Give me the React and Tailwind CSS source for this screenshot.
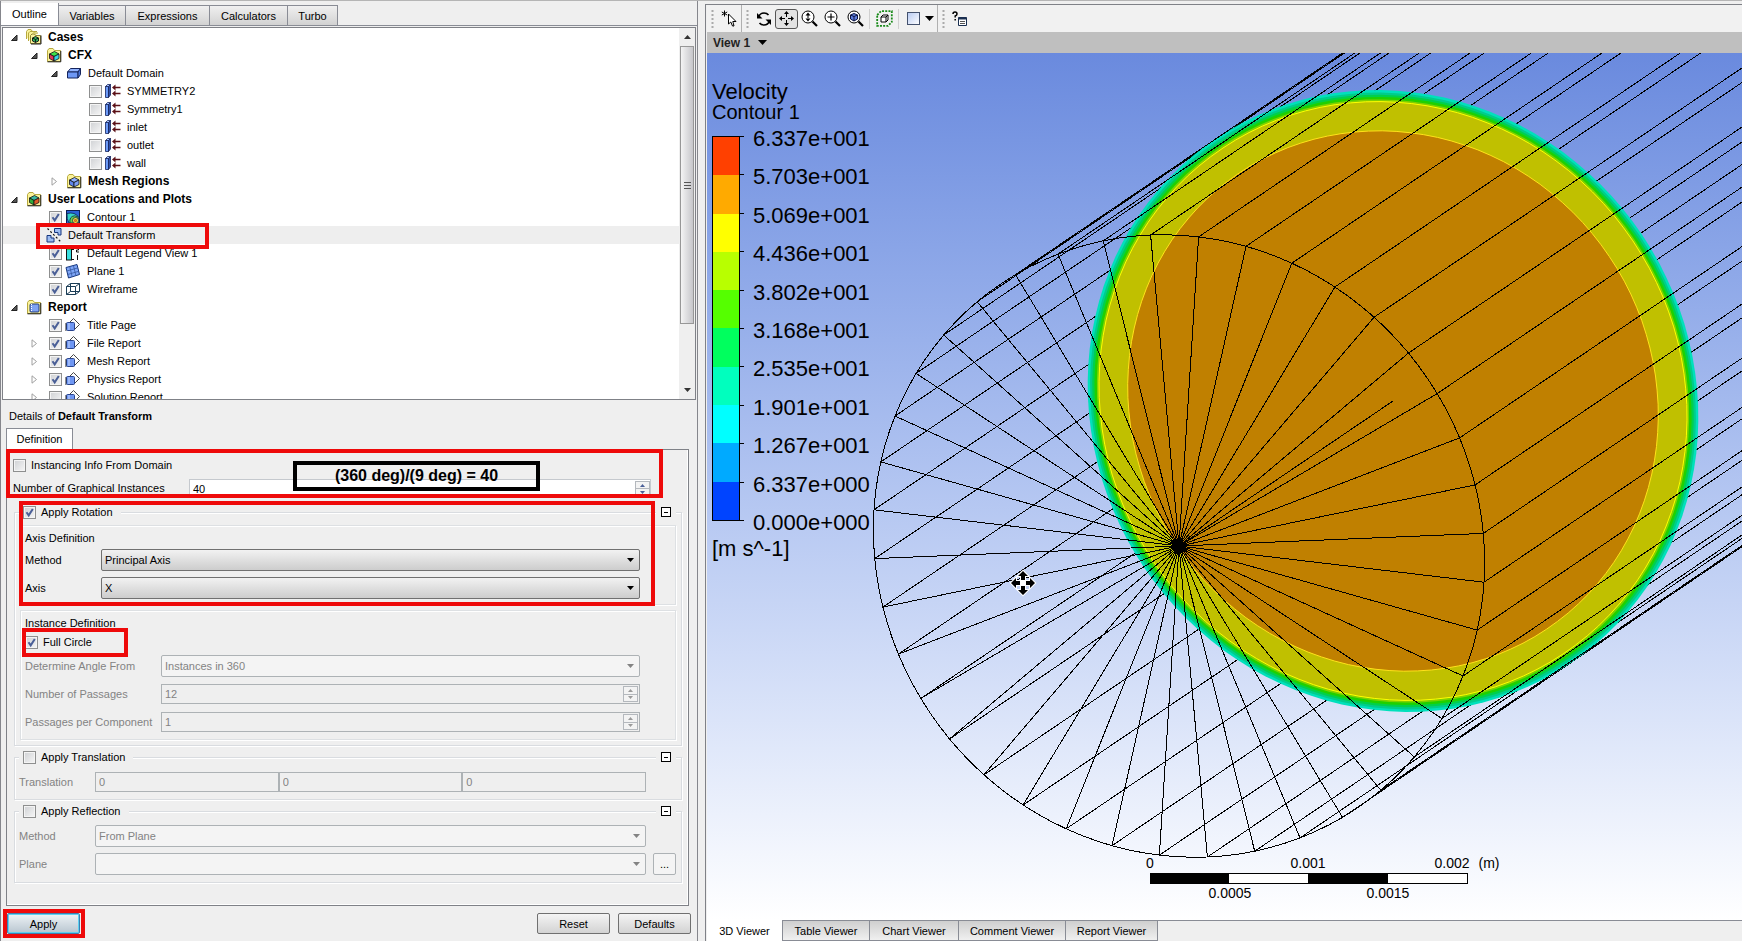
import React from "react";

/* ---------- small shared controls ---------- */

function Check({ label, checked = false, hidden = false }) {
  return (
    <label className="flex items-center whitespace-nowrap">
      <span className="relative block h-[13px] w-[13px] shrink-0">
        <input
          type="checkbox"
          defaultChecked={checked}
          aria-label={hidden ? label : undefined}
          className="peer block h-[13px] w-[13px] appearance-none border border-[#8e8f8f] bg-gradient-to-br from-[#cfd1d4] to-[#f6f6f6] shadow-[inset_0_0_0_1px_#f4f4f4]"
        />
        <svg viewBox="0 0 13 13" className="pointer-events-none absolute inset-0 hidden h-[13px] w-[13px] peer-checked:block">
          <path d="M3.5 6.2 L5.7 9.4 L9.8 3" fill="none" stroke="#4a5f97" strokeWidth="2" />
        </svg>
      </span>
      {!hidden && <span className="ml-[5px]">{label}</span>}
    </label>
  );
}

function Combo({ id, value, disabled = false }) {
  return (
    <div className="relative min-w-0 flex-1">
      <select
        id={id}
        disabled={disabled}
        className={
          disabled
            ? "block h-[22px] w-full appearance-none rounded-[2px] border border-[#adb2b5] bg-[#f4f4f4] pl-[3px] text-[11px] text-[#838383] opacity-100"
            : "block h-[22px] w-full appearance-none rounded-[2px] border border-[#707070] bg-gradient-to-b from-[#f2f2f2] to-[#cdcdcd] pl-[3px] text-[11px] text-black"
        }
      >
        <option>{value}</option>
      </select>
      <svg viewBox="0 0 7 4" className="pointer-events-none absolute top-[9px] right-[6px] h-[4px] w-[7px]">
        <path d="M0 0H7L3.5 4Z" fill={disabled ? "#838383" : "#000"} />
      </svg>
    </div>
  );
}

function Arrows({ color }) {
  return (
    <div className="flex w-[15px] flex-col">
      <button type="button" aria-label="Increase" className="flex flex-1 items-center justify-center border border-[#b4b8bd] bg-[#f3f3f3]">
        <svg viewBox="0 0 5 3" className="h-[3px] w-[5px]"><path d="M0 3H5L2.5 0Z" fill={color} /></svg>
      </button>
      <button type="button" aria-label="Decrease" className="flex flex-1 items-center justify-center border border-t-0 border-[#b4b8bd] bg-[#f3f3f3]">
        <svg viewBox="0 0 5 3" className="h-[3px] w-[5px]"><path d="M0 0H5L2.5 3Z" fill={color} /></svg>
      </button>
    </div>
  );
}

function Spin({ id, value }) {
  return (
    <div className="flex h-[20px] min-w-0 flex-1 border border-[#adb2b5] p-[1px]">
      <input id={id} disabled defaultValue={value} className="min-w-0 flex-1 bg-transparent pl-[2px] text-[#838383]" />
      <Arrows color="#9a9a9a" />
    </div>
  );
}

function Collapse({ label }) {
  return (
    <button type="button" aria-label={label} className="flex h-[10px] w-[10px] items-center justify-center border border-black bg-white">
      <span className="block h-px w-[4px] bg-black" />
    </button>
  );
}

function Group({ label, checked, children, className }) {
  return (
    <section className={"ml-px border border-[#d9dce0] shadow-[inset_1px_1px_0_#fff,1px_1px_0_#fff] " + className}>
      <div className="-mt-[8px] ml-[4px] mr-[5px] flex h-[14px] items-center justify-between">
        <div className="bg-[#efefef] pr-[8px] pl-[4px]">
          <Check label={label} checked={checked} />
        </div>
        <div className="bg-[#efefef] px-[5px]">
          <Collapse label={"Collapse " + label} />
        </div>
      </div>
      {children}
    </section>
  );
}

/* ---------- tree icons ---------- */

function Cube({ top, left, right }) {
  return (
    <g stroke="#111" strokeWidth="0.8" strokeLinejoin="round">
      <path d="M3.5 7 8.5 4.5 13 7 8 9.5Z" fill={top} />
      <path d="M3.5 7 8 9.5V14L3.5 11.5Z" fill={left} />
      <path d="M13 7 8 9.5V14L13 11.5Z" fill={right} />
    </g>
  );
}

function Folder({ children }) {
  return (
    <g>
      <path d="M1.5 14.5V3.5L3 1.5H7L8.5 3.5H14.5V14.5Z" fill="#fbf39a" stroke="#b7a83e" />
      <path d="M14.8 4V14.8H1.5" fill="none" stroke="#222" />
      {children}
    </g>
  );
}

const ICONS = {
  cases: (
    <g>
      <path d="M.5 10V2.5L2 .5H5L6.500 2.500H11" fill="#fbf39a" stroke="#b7a83e" />
      <path d="M2.500 12V4L4 2.500H7L8.500 4H12" fill="#fbf39a" stroke="#b7a83e" />
      <path d="M4.500 14.500V6.500L6 5H8.500L9.500 6.500H14.500V14.500Z" fill="#fbf39a" stroke="#8f8430" />
      <path d="M15 6.500V15H5" fill="none" stroke="#222" />
      <path d="M6.500 9 9.500 7.500 12.500 9V12L9.500 13.500 6.500 12Z" fill="#2fae5c" stroke="#111" strokeWidth=".9" />
      <path d="M6.500 9 9.500 10.500 12.500 9M9.500 10.500V13.500" fill="none" stroke="#111" strokeWidth=".9" />
    </g>
  ),
  cfx: <Folder><Cube top="#3ee04a" left="#e0335a" right="#35d3e8" /></Folder>,
  mesh: <Folder><Cube top="#8fb0ff" left="#5f86ee" right="#7c9ef6" /></Folder>,
  plots: <Folder><Cube top="#38b9a0" left="#2fae3c" right="#e25a28" /></Folder>,
  report: (
    <Folder>
      <rect x="4" y="5" width="9" height="8" rx="1" fill="#7fa2f2" stroke="#233a7d" />
      <path d="M5.500 5V13" stroke="#fff" strokeDasharray="1 1" />
    </Folder>
  ),
  domain: (
    <g stroke="#15245c" strokeLinejoin="round">
      <path d="M1.500 7 4.500 3.500H14.500L12 7Z" fill="#8fb2ff" />
      <path d="M1.500 7H12V13H1.500Z" fill="#6d97f5" />
      <path d="M12 7 14.500 3.500V9.500L12 13Z" fill="#4a74d8" />
    </g>
  ),
  boundary: (
    <g>
      <path d="M.5 3.500H3.500V14.500H.5Z" fill="#6d9bf8" stroke="#15245c" strokeWidth=".8" />
      <path d="M.5 3.500 2.500 1.500H5.500L3.500 3.500Z" fill="#a6c0ff" stroke="#15245c" strokeWidth=".8" />
      <path d="M3.500 3.500 5.500 1.500V12L3.500 14.500Z" fill="#2e4fa8" stroke="#15245c" strokeWidth=".8" />
      <path d="M9 4.500H15.500M9 10.500H15.500" stroke="#5c1218" strokeWidth="1.300" />
      <path d="M7 4.500 10.500 1.500V7.500ZM7 10.500 10.500 7.500V13.500Z" fill="#5c1218" />
    </g>
  ),
  contour: (
    <g>
      <rect x="1.500" y="1.500" width="13" height="13" fill="#2a62d8" stroke="#0d1f50" />
      <path d="M2 4.500Q10 2.500 14 8.500V14H4Q1.500 10 2 4.500Z" fill="#35d3c8" stroke="#0d1f50" strokeWidth=".8" />
      <path d="M5 14Q4 7.500 9.500 6.800Q13.500 7 14 10V14Z" fill="#63d94a" stroke="#0d1f50" strokeWidth=".8" />
      <circle cx="10.500" cy="11.500" r="3" fill="#f7e948" stroke="#0d1f50" strokeWidth=".8" />
      <circle cx="10.500" cy="11.500" r="1.200" fill="#ef7d28" stroke="#7a3a10" strokeWidth=".5" />
    </g>
  ),
  transform: (
    <g>
      <path d="M1 8.500H5V11H8V15H1Z" fill="#9cbcf2" stroke="#15357c" />
      <path d="M8.500 1.500H15V8H12V5.500H8.500Z" fill="#9cbcf2" stroke="#15357c" />
      <path d="M1.500 1.500 14.500 14.500" stroke="#111" strokeDasharray="2 2" strokeWidth="1.200" />
    </g>
  ),
  legend: (
    <g>
      <rect x="1.500" y="-1" width="5" height="16" fill="#39dfe0" stroke="#111" />
      <rect x="2" y="0" width="4" height="5" fill="#2fbd4c" />
      <path d="M6.500 4.500H9M6.500 14.500H9" stroke="#111" />
      <path d="M11 2.500H13.500V5H11.500V7H14M12.500 10V15" fill="none" stroke="#111" />
    </g>
  ),
  plane: (
    <g>
      <path d="M1 4.500 12 1.500 14.500 11.500 3.500 15Z" fill="#7fa6f7" stroke="#15357c" strokeLinejoin="round" />
      <path d="M4.700 3.500 7.200 13.800M8.400 2.500 10.900 12.600M1.800 8 12.800 4.900M2.700 11.500 13.600 8.300" stroke="#35589f" strokeWidth=".8" />
    </g>
  ),
  wire: (
    <g fill="none" stroke="#1a3c55" strokeWidth="1">
      <path d="M1.500 5.500H10.500V13.500H1.500ZM5.500 2.500H14.500V10.500H5.500ZM1.500 5.500 5.500 2.500M10.500 5.500 14.500 2.500M10.500 13.500 14.500 10.500M1.500 13.500 5.500 10.500" />
    </g>
  ),
  page: (
    <g>
      <path d="M4 6 8.500 1.500 14.500 7.500 9 13Z" fill="#fff" stroke="#333" strokeWidth=".9" />
      <rect x="1.500" y="5.500" width="8" height="8" rx="1" fill="#6f97f3" stroke="#2a458f" />
      <path d="M1.500 7H0M1.500 9H0M1.500 11H0M1.500 13H0" stroke="#222" />
      <path d="M4 6V13" stroke="#c9d8ff" />
    </g>
  ),
};

function TreeIcon({ name, className }) {
  return (
    <svg viewBox="0 0 16 16" aria-hidden="true" className={"block h-[16px] w-[16px] shrink-0 " + className}>
      {ICONS[name]}
    </svg>
  );
}

function Twisty({ state }) {
  return (
    <span className="flex h-[12px] w-[12px] shrink-0 items-center justify-center">
      {state === "open" && (
        <svg viewBox="0 0 7 7" className="h-[7px] w-[7px]"><path d="M.5 6.500H6V1Z" fill="#555" stroke="#222" /></svg>
      )}
      {state === "closed" && (
        <svg viewBox="0 0 7 9" className="h-[9px] w-[7px]"><path d="M1 .8 5.500 4.500 1 8.200Z" fill="#fff" stroke="#a0a0a0" /></svg>
      )}
    </span>
  );
}

const TREE = [
  { t: "Cases", icon: "cases", pad: "pl-[5px]", tw: "open", bold: true },
  { t: "CFX", icon: "cfx", pad: "pl-[25px]", tw: "open", bold: true },
  { t: "Default Domain", icon: "domain", pad: "pl-[45px]", tw: "open" },
  { t: "SYMMETRY2", icon: "boundary", pad: "pl-[65px]", check: false },
  { t: "Symmetry1", icon: "boundary", pad: "pl-[65px]", check: false },
  { t: "inlet", icon: "boundary", pad: "pl-[65px]", check: false },
  { t: "outlet", icon: "boundary", pad: "pl-[65px]", check: false },
  { t: "wall", icon: "boundary", pad: "pl-[65px]", check: false },
  { t: "Mesh Regions", icon: "mesh", pad: "pl-[45px]", tw: "closed", bold: true },
  { t: "User Locations and Plots", icon: "plots", pad: "pl-[5px]", tw: "open", bold: true },
  { t: "Contour 1", icon: "contour", pad: "pl-[25px]", check: true },
  { t: "Default Transform", icon: "transform", pad: "pl-[25px]", selected: true },
  { t: "Default Legend View 1", icon: "legend", pad: "pl-[25px]", check: true },
  { t: "Plane 1", icon: "plane", pad: "pl-[25px]", check: true },
  { t: "Wireframe", icon: "wire", pad: "pl-[25px]", check: true },
  { t: "Report", icon: "report", pad: "pl-[5px]", tw: "open", bold: true },
  { t: "Title Page", icon: "page", pad: "pl-[25px]", check: true },
  { t: "File Report", icon: "page", pad: "pl-[25px]", tw: "closed", check: true },
  { t: "Mesh Report", icon: "page", pad: "pl-[25px]", tw: "closed", check: true },
  { t: "Physics Report", icon: "page", pad: "pl-[25px]", tw: "closed", check: true },
  { t: "Solution Report", icon: "page", pad: "pl-[25px]", tw: "closed", check: false },
];

function TreeRow({ row }) {
  const hasCheck = row.check !== undefined;
  return (
    <li className={"relative flex h-[18px] items-center whitespace-nowrap " + row.pad + (row.selected ? " z-10 bg-[#eeeeee]" : "")}>
      <Twisty state={row.tw} />
      {hasCheck && (
        <span className="ml-[9px]">
          <Check label={row.t} checked={row.check} hidden />
        </span>
      )}
      <TreeIcon name={row.icon} className={hasCheck ? "ml-[3px]" : "ml-[6px]"} />
      <span className={"ml-[6px]" + (row.bold ? " text-[12px] font-bold" : "")}>{row.t}</span>
      {row.selected && <span className="absolute -top-[3px] left-[33px] h-[26px] w-[173px] border-4 border-[#ee0a0a]" />}
    </li>
  );
}

/* ---------- left dock ---------- */

const TAB = "h-[20px] border border-b-0 border-l-0 border-[#898c95] bg-gradient-to-b from-[#f0f0f0] to-[#d2d2d2]";

function Outline() {
  return (
    <div>
      <nav className="flex h-[22px] items-end">
        <button type="button" className="h-[22px] w-[58px] border-r border-[#898c95] bg-white">Outline</button>
        <button type="button" className={TAB + " w-[67px]"}>Variables</button>
        <button type="button" className={TAB + " w-[84px]"}>Expressions</button>
        <button type="button" className={TAB + " w-[78px]"}>Calculators</button>
        <button type="button" className={TAB + " w-[50px]"}>Turbo</button>
      </nav>
      <div className="border-t border-[#898c95] pt-[1px] pr-[1px] pl-[1px]">
        <div className="flex h-[373px] border border-[#7f8187] bg-white">
          <ul className="min-w-0 flex-1 overflow-hidden">
            {TREE.map((row) => (
              <TreeRow key={row.t} row={row} />
            ))}
          </ul>
          <div className="flex w-[16px] flex-col items-center bg-[#efefef]">
            <button type="button" aria-label="Scroll up" className="flex h-[18px] w-full items-center justify-center">
              <svg viewBox="0 0 7 4" className="h-[4px] w-[7px]"><path d="M0 4H7L3.500 0Z" fill="#333" /></svg>
            </button>
            <div className="flex h-[278px] w-[14px] flex-col items-center justify-center gap-[2px] border border-[#979797] bg-gradient-to-r from-[#f4f4f4] to-[#c6c6ca]">
              <span className="h-px w-[7px] bg-[#555]" />
              <span className="h-px w-[7px] bg-[#555]" />
              <span className="h-px w-[7px] bg-[#555]" />
            </div>
            <button type="button" aria-label="Scroll down" className="mt-auto flex h-[18px] w-full items-center justify-center">
              <svg viewBox="0 0 7 4" className="h-[4px] w-[7px]"><path d="M0 0H7L3.500 4Z" fill="#333" /></svg>
            </button>
          </div>
        </div>
      </div>
    </div>
  );
}

const FIELD = "h-[20px] min-w-0 flex-1 border border-[#adb2b5] pl-[3px] text-[#838383]";
const BUTTON = "h-[21px] w-[73px] rounded-[2px] border border-[#707070] bg-gradient-to-b from-[#f4f4f4] to-[#d3d3d3]";

function Details() {
  return (
    <form className="flex flex-col pt-[8px] pr-[6px] pl-[5px]" onSubmit={(e) => e.preventDefault()}>
      <h2 className="h-[16px] pl-[3px] leading-[16px]">
        Details of <b>Default Transform</b>
      </h2>
      <div className="mt-[4px] flex">
        <button type="button" className="h-[21px] w-[67px] border border-b-0 border-[#898c95] bg-white">Definition</button>
      </div>

      <div className="relative mr-[2px] border border-[#7f8187] px-[6px] pt-[8px] pb-[22px] shadow-[inset_-1px_-1px_0_#fff]">
        <div className="pointer-events-none absolute -top-[1px] -left-[1px] z-10 h-[49px] w-[657px] border-4 border-[#ee0a0a]" />
        <div className="pointer-events-none absolute top-[51px] left-[12px] z-10 h-[105px] w-[636px] border-4 border-[#ee0a0a]" />
        <div className="pointer-events-none absolute top-[11px] left-[286px] z-10 flex h-[30px] w-[247px] items-center justify-center border-4 border-black text-[16px] leading-none font-bold">
          (360 deg)/(9 deg) = 40
        </div>

        <div className="flex h-[14px] items-center">
          <Check label="Instancing Info From Domain" />
        </div>
        <div className="mt-[7px] flex h-[18px] items-end">
          <label htmlFor="instances" className="h-[16px] w-[176px]">Number of Graphical Instances</label>
          <div className="mr-[31px] flex h-[18px] min-w-0 flex-1 border border-[#c5c9ce] bg-white pt-[1px]">
            <input id="instances" defaultValue="40" className="min-w-0 flex-1 bg-transparent pl-[3px]" />
            <Arrows color="#4a5f97" />
          </div>
        </div>

        <Group label="Apply Rotation" checked className="mt-[15px] pb-[5px]">
          <div className="mx-[5px] mt-[6px] border border-[#dde0e3] px-[4px] pt-[5px] pb-[5px] shadow-[inset_1px_1px_0_#fff,1px_1px_0_#fff]">
            <p className="h-[14px] leading-[14px]">Axis Definition</p>
            <div className="mt-[4px] mr-[31px] flex items-center">
              <label htmlFor="method" className="w-[76px]">Method</label>
              <Combo id="method" value="Principal Axis" />
            </div>
            <div className="mt-[6px] mr-[31px] flex items-center">
              <label htmlFor="axis" className="w-[76px]">Axis</label>
              <Combo id="axis" value="X" />
            </div>
          </div>
          <div className="mx-[5px] mt-[5px] border border-[#dde0e3] px-[4px] pt-[5px] pb-[6px] shadow-[inset_1px_1px_0_#fff,1px_1px_0_#fff]">
            <p className="h-[14px] leading-[14px]">Instance Definition</p>
            <div className="relative mt-[5px] flex h-[14px] items-center">
              <Check label="Full Circle" checked />
              <span className="pointer-events-none absolute -top-[7px] -left-[3px] h-[29px] w-[106px] border-4 border-[#ee0a0a]" />
            </div>
            <div className="mt-[6px] mr-[31px] flex items-center text-[#838383]">
              <label htmlFor="angle" className="w-[136px]">Determine Angle From</label>
              <Combo id="angle" value="Instances in 360" disabled />
            </div>
            <div className="mt-[6px] mr-[31px] flex h-[22px] items-center text-[#838383]">
              <label htmlFor="passages" className="w-[136px]">Number of Passages</label>
              <Spin id="passages" value="12" />
            </div>
            <div className="mt-[6px] mr-[31px] flex h-[22px] items-center text-[#838383]">
              <label htmlFor="percomp" className="w-[136px]">Passages per Component</label>
              <Spin id="percomp" value="1" />
            </div>
          </div>
        </Group>

        <Group label="Apply Translation" className="mt-[11px] pb-[7px]">
          <div className="mt-[8px] mr-[35px] flex items-center pl-[4px] text-[#838383]">
            <label htmlFor="tx" className="w-[76px]">Translation</label>
            <input id="tx" disabled defaultValue="0" className={FIELD} />
            <input aria-label="Translation Y" disabled defaultValue="0" className={FIELD} />
            <input aria-label="Translation Z" disabled defaultValue="0" className={FIELD} />
          </div>
        </Group>

        <Group label="Apply Reflection" className="mt-[11px] pb-[7px]">
          <div className="mt-[7px] mr-[35px] flex items-center pl-[4px] text-[#838383]">
            <label htmlFor="rmethod" className="w-[76px]">Method</label>
            <Combo id="rmethod" value="From Plane" disabled />
          </div>
          <div className="mt-[6px] mr-[5px] flex items-center pl-[4px] text-[#838383]">
            <label htmlFor="plane" className="w-[76px]">Plane</label>
            <Combo id="plane" value="" disabled />
            <button type="button" aria-label="Choose plane" className="ml-[7px] h-[22px] w-[23px] rounded-[2px] border border-[#adb2b5] bg-[#f4f4f4] text-black">
              ...
            </button>
          </div>
        </Group>
      </div>

      <div className="mt-[7px] ml-px flex h-[21px] items-center gap-[8px]">
        <span className="relative mr-auto flex">
          <button type="submit" className="h-[21px] w-[73px] rounded-[2px] border border-[#3c7fb1] bg-gradient-to-b from-[#eef3f6] to-[#b9c6d0] shadow-[inset_0_0_0_1px_#5fd0f0]">
            Apply
          </button>
          <span className="pointer-events-none absolute -top-[4px] -left-[4px] h-[29px] w-[82px] border-4 border-[#ee0a0a]" />
        </span>
        <button type="button" className={BUTTON}>Reset</button>
        <button type="button" className={BUTTON}>Defaults</button>
      </div>
    </form>
  );
}

/* ---------- viewer ---------- */

function Grip() {
  return (
    <svg viewBox="0 0 3 20" className="h-[20px] w-[3px]">
      <path d="M1.500 1V20" stroke="#aaa" strokeWidth="2" strokeDasharray="2 2" />
    </svg>
  );
}

function Lens({ children }) {
  return (
    <svg viewBox="0 0 17 17" className="h-[17px] w-[17px]">
      <circle cx="7" cy="7" r="6" fill="#fff" stroke="#000" />
      <path d="M11.500 11.500 16 16" stroke="#000" strokeWidth="2.200" />
      {children}
    </svg>
  );
}

const SEP = "h-[27px] w-px bg-[#b0b0b0]";
const THIN = "h-[20px] w-px bg-[#d0d0d0]";

function Toolbar() {
  return (
    <div className="flex h-[27px] items-center bg-[#f1f1f1] pl-[4px]">
      <Grip />
      <button type="button" aria-label="Select" className="ml-[7px]">
        <svg viewBox="0 0 16 17" className="h-[17px] w-[16px]">
          <path d="M3.500 .5V6.500M.8 2 6.200 5M6.200 2 .8 5" stroke="#000" />
          <path d="M7.500 4V14L9.800 12L11.500 16H13L11.800 11.500H15Z" fill="#fff" stroke="#000" />
        </svg>
      </button>
      <span className={SEP + " ml-[4px]"} />
      <span className="ml-[4px]"><Grip /></span>
      <button type="button" aria-label="Rotate" className="ml-[7px]">
        <svg viewBox="0 0 16 16" className="h-[16px] w-[16px]">
          <path d="M2.500 6Q4 2 8 2Q11 2 12.500 4" fill="none" stroke="#000" strokeWidth="1.600" />
          <path d="M1 2V7.500H6.500Z" fill="#000" />
          <path d="M13.500 10Q12 14 8 14Q5 14 3.500 12" fill="none" stroke="#000" strokeWidth="1.600" />
          <path d="M15 14V8.500H9.500Z" fill="#000" />
        </svg>
      </button>
      <button type="button" aria-label="Pan" className="ml-[3px] flex h-[20px] w-[23px] items-center justify-center rounded-[3px] border border-[#555] bg-[#e2e2e2]">
        <svg viewBox="0 0 15 15" className="h-[15px] w-[15px]">
          <path d="M7.500 1V6M7.500 9V14M1 7.500H6M9 7.500H14" stroke="#000" />
          <path d="M7.500 0 10 3H5ZM7.500 15 10 12H5ZM0 7.500 3 5V10ZM15 7.500 12 5V10Z" fill="#000" />
        </svg>
      </button>
      <button type="button" aria-label="Zoom" className="ml-[3px]"><Lens><path d="M7 2.500 9.500 5.500H4.500ZM7 11.500 9.500 8.500H4.500ZM6.500 5H7.500V9H6.500Z" fill="#000" /></Lens></button>
      <button type="button" aria-label="Zoom box" className="ml-[6px]"><Lens><path d="M7 3.500V10.500M3.500 7H10.500" stroke="#000" strokeWidth="1.200" /></Lens></button>
      <button type="button" aria-label="Fit view" className="ml-[6px]">
        <Lens>
          <path d="M3.500 5 7 3.500 10.500 5V9L7 11 3.500 9Z" fill="#5f7fe0" stroke="#0b1340" />
          <path d="M3.500 5 7 6.500 10.500 5M7 6.500V11" fill="none" stroke="#0b1340" />
        </Lens>
      </button>
      <span className={THIN + " ml-[5px]"} />
      <button type="button" aria-label="Toggle highlighting" className="ml-[6px]">
        <svg viewBox="0 0 17 17" className="h-[17px] w-[17px]">
          <path d="M1.200 5 5 1.200H15.800V12L12 15.800H1.200Z" fill="none" stroke="#188a18" strokeWidth="1.800" strokeDasharray="2 1.200" />
          <path d="M5 7H10V12H5ZM5 7 7 5H12V10L10 12M10 7 12 5" fill="#fff" stroke="#000" />
        </svg>
      </button>
      <span className={THIN + " ml-[5px]"} />
      <button type="button" aria-label="Viewport layout" className="ml-[8px] flex items-center gap-[5px]">
        <svg viewBox="0 0 13 13" className="h-[13px] w-[13px]">
          <defs>
            <linearGradient id="vp" x1="0" y1="0" x2="1" y2="1"><stop offset="0" stopColor="#b7caf2" /><stop offset="1" stopColor="#fff" /></linearGradient>
          </defs>
          <rect x=".5" y=".5" width="12" height="12" fill="url(#vp)" stroke="#44526e" />
        </svg>
        <svg viewBox="0 0 9 5" className="h-[5px] w-[9px]"><path d="M0 0H9L4.500 5Z" fill="#000" /></svg>
      </button>
      <span className={SEP + " ml-[3px]"} />
      <span className="ml-[4px]"><Grip /></span>
      <button type="button" aria-label="Help" className="ml-[7px]">
        <svg viewBox="0 0 15 15" className="h-[15px] w-[15px]">
          <path d="M1 3Q1 1 3 1Q5 1 5 3Q5 4.200 3.200 5V6.500M3.200 8V9.500" fill="none" stroke="#000" strokeWidth="1.500" />
          <path d="M6.500 6.500H14.500V14.500H6.500Z" fill="#fff" stroke="#1a2f50" />
          <path d="M6.500 7.500H14.500" stroke="#1a2f50" strokeWidth="2" />
          <path d="M8 10.500H13M8 12.500H13" stroke="#555" />
        </svg>
      </button>
    </div>
  );
}

/* Oblique pipe: 40 instances of a 9 degree wedge, seen along a slanted axis. */
const C = [472, 493];
const D = [214, -145];
const COUNT = 40;
const offset = (a, s) => [s * (-28.4 * Math.cos(a) + 304.3 * Math.sin(a)), s * (-311 * Math.cos(a) - 12.6 * Math.sin(a))];
const pt = (x, y) => x.toFixed(1) + " " + y.toFixed(1);
const RIM = Array.from({ length: COUNT }, (_, k) => {
  const [x, y] = offset((k * 2 * Math.PI) / COUNT, 1);
  return [C[0] + x, C[1] + y];
});
const ring = (cx, cy, s) =>
  "M" +
  Array.from({ length: 120 }, (_, k) => {
    const [x, y] = offset((k * 2 * Math.PI) / 120, s);
    return pt(cx + x, cy + y);
  }).join("L") +
  "Z";
const disc = (s) => ring(C[0] + D[0], C[1] + D[1], s);
const seg = (p, q) => "M" + pt(p[0], p[1]) + "L" + pt(q[0], q[1]);
const along = (p, t) => [p[0] + D[0] * t, p[1] + D[1] * t];

const BEHIND = [...RIM, C].map((p) => seg(along(p, 1), along(p, 6))).join("");
const FRONT = [...RIM, C].map((p) => seg(p, along(p, 1))).join("");
const SPOKES = RIM.map((p) => seg(C, p)).join("");
const OUTER = ring(C[0], C[1], 1);

const BANDS = [
  [0.999, "#00e0bc"],
  [0.991, "#00cc8c"],
  [0.984, "#00d04c"],
  [0.977, "#20d000"],
  [0.969, "#80d000"],
];

function Scene() {
  return (
    <svg viewBox="0 0 1035 868" preserveAspectRatio="xMinYMin slice" className="absolute inset-0 h-full w-full" role="img" aria-label="Velocity contour on pipe section">
      <path d={BEHIND} stroke="#000" shapeRendering="crispEdges" />
      {BANDS.map(([s, fill]) => (
        <path key={s} d={disc(s)} fill={fill} />
      ))}
      <path d={disc(0.962)} fill="#c0c000" stroke="#ffff00" />
      <path d={disc(0.868)} fill="#c08000" stroke="#ffe21a" />
      <path d={FRONT + SPOKES + OUTER} fill="none" stroke="#000" shapeRendering="crispEdges" />
      <path d="M472 484 480 493 472 502 464 493Z" fill="#000" />

      <g transform="translate(316 530)" fill="#000" stroke="#fff" strokeWidth="2" paintOrder="stroke">
        <path d="M0-12 5-7H2V-3H-2V-7H-5ZM0 12 5 7H2V3H-2V7H-5ZM-12 0-7-5V-2H-3V2H-7V5ZM12 0 7-5V-2H3V2H7V5Z" />
        <rect x="-2" y="-2" width="4" height="4" fill="#fff" stroke="none" />
      </g>

      <g shapeRendering="crispEdges">
        <rect x="443" y="820" width="318" height="11" fill="#000" />
        <rect x="522" y="821" width="79" height="9" fill="#fff" />
        <rect x="681" y="821" width="79" height="9" fill="#fff" />
      </g>
      <g fontSize="14" textAnchor="middle" fill="#000">
        <text x="443" y="815">0</text>
        <text x="601" y="815">0.001</text>
        <text x="745" y="815">0.002</text>
        <text x="782" y="815">(m)</text>
        <text x="523" y="845">0.0005</text>
        <text x="681" y="845">0.0015</text>
      </g>
    </svg>
  );
}

const LEVELS = ["6.337e+001", "5.703e+001", "5.069e+001", "4.436e+001", "3.802e+001", "3.168e+001", "2.535e+001", "1.901e+001", "1.267e+001", "6.337e+000", "0.000e+000"];
const COLORS = ["bg-[#ff4000]", "bg-[#ffaa00]", "bg-[#ffff00]", "bg-[#b8ff00]", "bg-[#55ff00]", "bg-[#00ff5e]", "bg-[#00ffbe]", "bg-[#00ffff]", "bg-[#00aaff]", "bg-[#0044ff]"];

function Legend() {
  return (
    <div className="relative w-max pt-[27px] pl-[5px]">
      <p className="text-[22px] leading-[24px]">Velocity</p>
      <p className="text-[20px] leading-[16px]">Contour 1</p>
      <div className="flex">
        <div className="mt-[16px] flex h-[385px] w-[28px] flex-col border border-black">
          {COLORS.map((c) => (
            <span key={c} className={"flex-1 " + c} />
          ))}
        </div>
        <div className="mt-[16px] flex h-[385px] w-[4px] flex-col justify-between">
          {LEVELS.map((l) => (
            <span key={l} className="h-px bg-black" />
          ))}
        </div>
        <div className="mt-[8px] ml-[9px] flex h-[406px] flex-col justify-between text-[22px] leading-[22px]">
          {LEVELS.map((l) => (
            <span key={l}>{l}</span>
          ))}
        </div>
      </div>
      <p className="mt-[2px] text-[22px] leading-[26px]">[m s^-1]</p>
    </div>
  );
}

const VTAB = "h-[20px] border-r border-b border-[#898c95] bg-gradient-to-b from-[#cfcfcf] to-[#f0f0f0]";

function Viewer() {
  return (
    <main className="mt-[3px] ml-[7px] flex min-w-0 flex-1 flex-col border-t border-l border-[#7f8187] pl-[1px]">
      <Toolbar />
      <div className="flex h-[21px] items-center bg-[#bfbfbf] pl-[6px]">
        <button type="button" className="flex items-center gap-[8px] text-[12px] font-bold text-[#222]">
          View 1
          <svg viewBox="0 0 9 5" className="h-[5px] w-[9px]"><path d="M0 0H9L4.500 5Z" fill="#000" /></svg>
        </button>
      </div>
      <div className="relative flex-1 overflow-hidden bg-gradient-to-b from-[#6a8ade] to-white">
        <Scene />
        <Legend />
      </div>
      <nav className="flex h-[21px]">
        <button type="button" className="w-[76px] border-r border-[#898c95] bg-white">3D Viewer</button>
        <div className="flex flex-1 border-t border-[#898c95]">
          <button type="button" className={VTAB + " w-[87px]"}>Table Viewer</button>
          <button type="button" className={VTAB + " w-[89px]"}>Chart Viewer</button>
          <button type="button" className={VTAB + " w-[107px]"}>Comment Viewer</button>
          <button type="button" className={VTAB + " w-[92px]"}>Report Viewer</button>
        </div>
      </nav>
    </main>
  );
}

export default function App() {
  return (
    <div className="flex min-h-screen border-t border-[#b5b5b5] bg-[#efefef] font-['Liberation_Sans',Arial,sans-serif] text-[11px] leading-[14px] text-black">
      <aside className="w-[698px] shrink-0 border-x border-[#85868c] pt-[2px]">
        <Outline />
        <Details />
      </aside>
      <Viewer />
    </div>
  );
}
